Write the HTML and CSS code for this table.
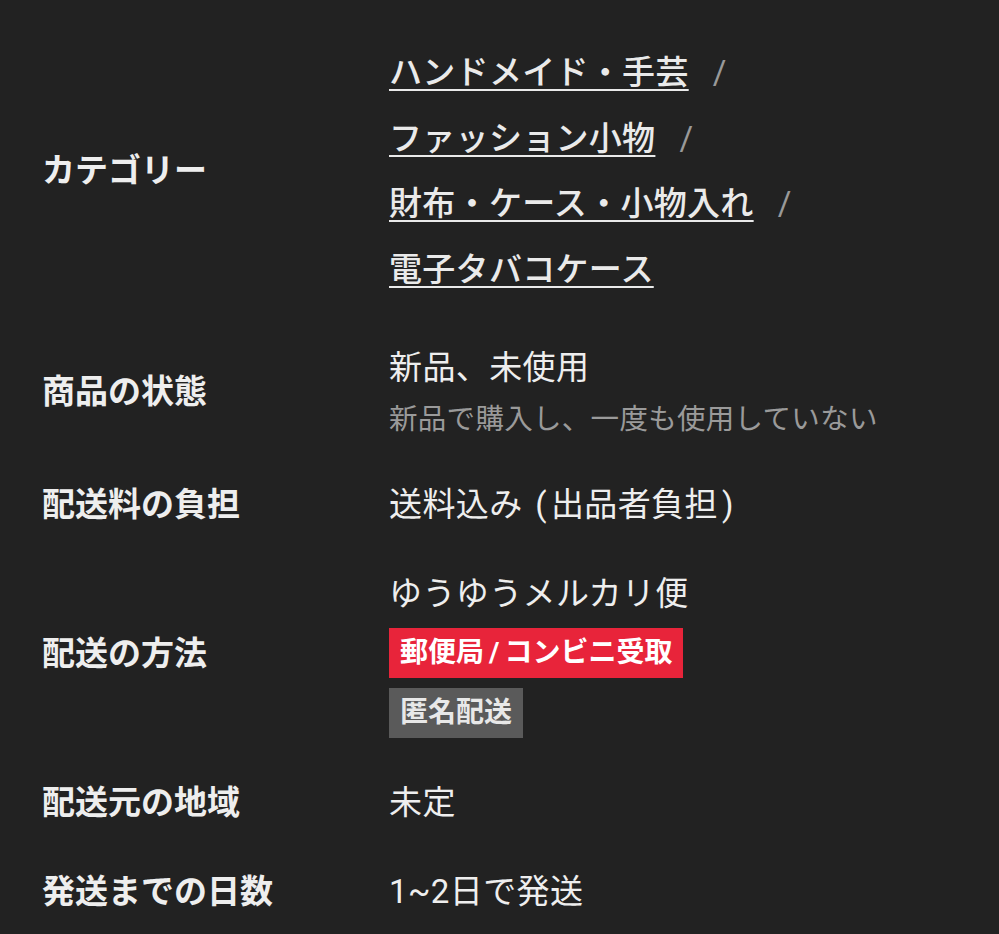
FILE: index.html
```html
<!DOCTYPE html>
<html lang="ja">
<head>
<meta charset="utf-8">
<link rel="stylesheet" href="styles.css">
</head>
<body>
<div class="table">
  <div class="row">
    <div class="label">カテゴリー</div>
    <div class="value cats">
      <div class="cat"><a href="#">ハンドメイド・手芸</a><span class="sep">/</span></div>
      <div class="cat"><a href="#">ファッション小物</a><span class="sep">/</span></div>
      <div class="cat"><a href="#">財布・ケース・小物入れ</a><span class="sep">/</span></div>
      <div class="cat"><a href="#">電子タバコケース</a></div>
    </div>
  </div>
  <div class="row">
    <div class="label">商品の状態</div>
    <div class="value">
      <div class="line">新品、未使用</div>
      <div class="sub">新品で購入し、一度も使用していない</div>
    </div>
  </div>
  <div class="row">
    <div class="label">配送料の負担</div>
    <div class="value"><div class="line">送料込み <span class="paren">(</span>出品者負担<span class="paren">)</span></div></div>
  </div>
  <div class="row">
    <div class="label">配送の方法</div>
    <div class="value">
      <div class="line">ゆうゆうメルカリ便</div>
      <div class="badges">
        <span class="badge red">郵便局<span class="slash">/</span>コンビニ受取</span>
        <span class="badge gray">匿名配送</span>
      </div>
    </div>
  </div>
  <div class="row">
    <div class="label">配送元の地域</div>
    <div class="value"><div class="line">未定</div></div>
  </div>
  <div class="row">
    <div class="label">発送までの日数</div>
    <div class="value"><div class="line">1~2日で発送</div></div>
  </div>
</div>
</body>
</html>
```
FILE: styles.css
```css
html, body {
  margin: 0;
  padding: 0;
  background: #222222;
}
body {
  font-family: Roboto, "Noto Sans CJK JP", "Noto Sans", sans-serif;
  color: #eeeeee;
  overflow: hidden;
}
.table {
  display: flex;
  flex-direction: column;
  gap: 41px;
  padding: 40px 0 0 42px;
}
.row {
  display: grid;
  grid-template-columns: 347px 1fr;
  align-items: center;
}
.label {
  font-size: 33px;
  font-weight: 700;
  line-height: 48px;
}
.value {
  font-size: 33px;
  line-height: 48px;
  letter-spacing: 0.4px;
}
.paren { margin: 0 4px; }
.cats .cat {
  line-height: 65.7px;
  font-weight: 500;
  letter-spacing: 0.3px;
}
.cat a {
  color: #eaeaea;
  text-decoration: underline;
  text-decoration-thickness: 2px;
  text-underline-offset: 5px;
}
.sep {
  color: #999999;
  font-weight: 400;
  margin-left: 24px;
}
.sub {
  font-size: 28.5px;
  line-height: 40px;
  color: #9a9a9a;
  margin-top: 8px;
  letter-spacing: 0.3px;
}
.badges {
  display: flex;
  flex-direction: column;
  align-items: flex-start;
  gap: 10px;
  margin-top: 10px;
}
.badge {
  box-sizing: border-box;
  height: 50px;
  font-size: 28px;
  font-weight: 700;
  line-height: 50px;
  padding: 0 11px;
  color: #ffffff;
  letter-spacing: 0;
}
.slash { margin: 0 5px; }
.badge.red { background: #e8243a; }
.badge.gray { background: #5a5a5a; color: #e8e8e8; }
```
